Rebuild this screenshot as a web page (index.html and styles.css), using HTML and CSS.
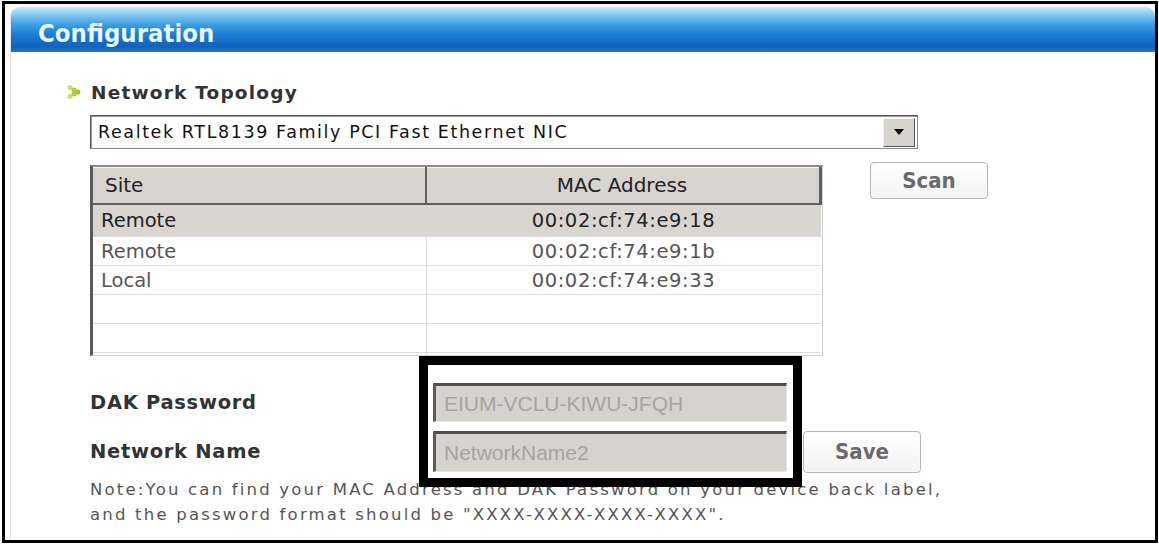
FILE: index.html
```html
<!DOCTYPE html>
<html lang="en">
<head>
<meta charset="utf-8">
<title>Configuration</title>
<link rel="stylesheet" href="styles.css">
</head>
<body>
<div class="frame">
  <div class="panel">
    <div class="titlebar"><span class="title">Configuration</span></div>
    <div class="content">
      <h2 class="section">
        <svg class="bullet" width="14" height="14" viewBox="0 0 14 14" aria-hidden="true">
          <circle cx="3" cy="2.6" r="2.4" fill="#cddc6a"/>
          <circle cx="7" cy="4.9" r="2.5" fill="#afc93e"/>
          <circle cx="10.8" cy="7" r="2.6" fill="#9ebf33"/>
          <circle cx="7" cy="9.1" r="2.5" fill="#afc93e"/>
          <circle cx="3" cy="11.4" r="2.4" fill="#cddc6a"/>
        </svg>
        <span>Network Topology</span>
      </h2>
      <div class="select">
        <span class="select-text">Realtek RTL8139 Family PCI Fast Ethernet NIC</span>
        <span class="select-btn">
          <svg width="10" height="6" viewBox="0 0 10 6" aria-hidden="true"><path d="M0 0H10L5 6Z" fill="#000"/></svg>
        </span>
      </div>
      <div class="table-row">
        <div class="grid">
          <table>
            <thead>
              <tr><th class="c-site">Site</th><th class="c-mac">MAC Address</th></tr>
            </thead>
            <tbody>
              <tr class="sel"><td class="c-site">Remote</td><td class="c-mac">00:02:cf:74:e9:18</td></tr>
              <tr><td class="c-site">Remote</td><td class="c-mac">00:02:cf:74:e9:1b</td></tr>
              <tr><td class="c-site">Local</td><td class="c-mac">00:02:cf:74:e9:33</td></tr>
              <tr><td class="c-site"></td><td class="c-mac"></td></tr>
              <tr><td class="c-site"></td><td class="c-mac"></td></tr>
              <tr><td class="c-site"></td><td class="c-mac"></td></tr>
            </tbody>
          </table>
        </div>
        <button class="btn btn-scan" type="button">Scan</button>
      </div>
      <div class="form">
        <div class="field field-dak">
          <span class="label">DAK Password</span>
          <span class="input">EIUM-VCLU-KIWU-JFQH</span>
        </div>
        <div class="field field-name">
          <span class="label">Network Name</span>
          <span class="input">NetworkName2</span>
          <button class="btn btn-save" type="button">Save</button>
        </div>
        <p class="note">Note:You can find your MAC Address and DAK Password on your device back label,<br>and the password format should be "XXXX-XXXX-XXXX-XXXX".</p>
        <div class="highlight"></div>
      </div>
    </div>
  </div>
</div>
</body>
</html>
```
FILE: styles.css
```css
* { box-sizing: border-box; }
html, body { margin: 0; padding: 0; background: #fff; }
body { width: 1159px; height: 545px; overflow: hidden; font-family: "DejaVu Sans", Verdana, sans-serif; }

.frame {
  margin: 1px 0 0 2px;
  width: 1156px;
  height: 542px;
  border: 3px solid #000;
  padding: 3px 0 0 5px;
  background: #fff;
}

.panel {
  width: 1145px;
  height: 533px;
  border-left: 1px solid #e4e4e4;
  border-radius: 9px 9px 0 0;
  background: #fff;
}

.titlebar {
  height: 45px;
  border-radius: 9px 9px 0 0;
  background: linear-gradient(to bottom, #c4ecfa 0%, #8fd0f0 14%, #3ea0e4 38%, #1c7fd6 60%, #0f62bd 88%, #2a74c4 100%);
  padding: 11px 0 0 27px;
}
.title {
  font-family: "DejaVu Sans Condensed", "DejaVu Sans", sans-serif;
  font-stretch: condensed;
  font-weight: bold;
  font-size: 25.5px;
  line-height: 30px;
  color: #e6f6ff;
  text-shadow: 0 0 1px rgba(0, 40, 90, 0.35);
}

.content { padding: 28px 0 0 79px; }

.section {
  display: flex;
  align-items: center;
  gap: 10px;
  margin: 0 0 11px -23px;
  height: 24px;
  font-family: "DejaVu Sans", Verdana, sans-serif;
  font-size: 18.5px;
  letter-spacing: 1.2px;
  font-weight: bold;
  color: #333;
}
.bullet { flex: none; }

.select {
  display: flex;
  align-items: center;
  justify-content: space-between;
  width: 828px;
  height: 34px;
  border: 1px solid #8a8a8a;
  border-top-color: #555;
  border-left-color: #555;
  box-shadow: inset 1px 1px 0 #9a9a9a;
  padding: 0 2px 0 7px;
  background: #fff;
}
.select-text {
  font-family: "DejaVu Sans", Verdana, sans-serif;
  font-size: 17.5px;
  letter-spacing: 1.6px;
  color: #111;
}
.select-btn {
  display: flex;
  align-items: center;
  justify-content: center;
  width: 32px;
  height: 29px;
  background: #d6d3ce;
  border: 1px solid #f4f4f4;
  border-right-color: #555;
  border-bottom-color: #555;
}

.table-row {
  display: flex;
  align-items: flex-start;
  gap: 47px;
  margin-top: 16px;
}

.grid {
  width: 733px;
  height: 191px;
  overflow: hidden;
  border-top: 2px solid #8a8a8a;
  border-left: 3px solid #5a5a5a;
  border-right: 1px solid #d0d0d0;
  border-bottom: 1px solid #d0d0d0;
  background: #fff;
}
table {
  border-collapse: collapse;
  width: 729px;
  font-family: "DejaVu Sans", Verdana, sans-serif;
  font-size: 19.5px;
}
th {
  height: 36px;
  font-weight: normal;
  font-size: 20px;
  color: #222;
  background: #d7d4cf;
  border-top: 1px solid #fafafa;
  border-bottom: 2px solid #5e5e5e;
  padding: 0;
}
th.c-site { text-align: left; padding-left: 12px; border-right: 2px solid #5e5e5e; }
th.c-mac { text-align: center; padding-right: 2px; border-right: 3px solid #5e5e5e; }
td {
  height: 29px;
  padding: 0;
  color: #555;
  border-bottom: 1px solid #dcdcdc;
}
td.c-site { width: 333px; text-align: left; padding-left: 8px; border-right: 1px solid #dcdcdc; }
td.c-mac { text-align: center; letter-spacing: 0.6px; }
tr.sel td { height: 33px; background: #d9d6d2; color: #222; border-right-color: #d9d6d2; }

.btn {
  font-family: "DejaVu Sans Condensed", "DejaVu Sans", sans-serif;
  font-stretch: condensed;
  font-weight: bold;
  font-size: 22px;
  color: #6a6a6a;
  background: linear-gradient(to bottom, #ffffff, #f3f3f3);
  border: 1px solid #b5b5b5;
  border-radius: 4px;
  box-shadow: inset 0 0 0 1px #fafafa;
  padding: 0;
  cursor: pointer;
}
.btn-scan { width: 118px; height: 37px; margin-top: -3px; }

.form { position: relative; padding-top: 27px; }
.field { display: flex; align-items: center; }
.field-dak { height: 39px; }
.field-name { height: 41px; margin-top: 9px; }
.label {
  width: 343px;
  font-family: "DejaVu Sans", Verdana, sans-serif;
  font-weight: bold;
  font-size: 19.5px;
  letter-spacing: 0.7px;
  color: #333;
}
.input {
  display: flex;
  align-items: center;
  width: 354px;
  height: 100%;
  padding-left: 8px;
  background: #d6d3cf;
  border-top: 3px solid #4e4e4e;
  border-left: 3px solid #5a5a5a;
  border-right: 1px solid #e6e6e6;
  border-bottom: 1px solid #e6e6e6;
  font-family: "Liberation Sans", Arial, sans-serif;
  font-size: 21px;
  color: #a3a3a3;
}
.btn-save { width: 118px; height: 42px; margin-left: 16px; }

.note {
  margin: 5px 0 0 0;
  font-family: "DejaVu Sans", Verdana, sans-serif;
  font-size: 16.5px;
  letter-spacing: 2.2px;
  line-height: 25px;
  color: #555;
}

.highlight {
  position: absolute;
  left: 329px;
  top: 0;
  width: 383px;
  height: 131px;
  border: 9px solid #000;
  pointer-events: none;
}
```
